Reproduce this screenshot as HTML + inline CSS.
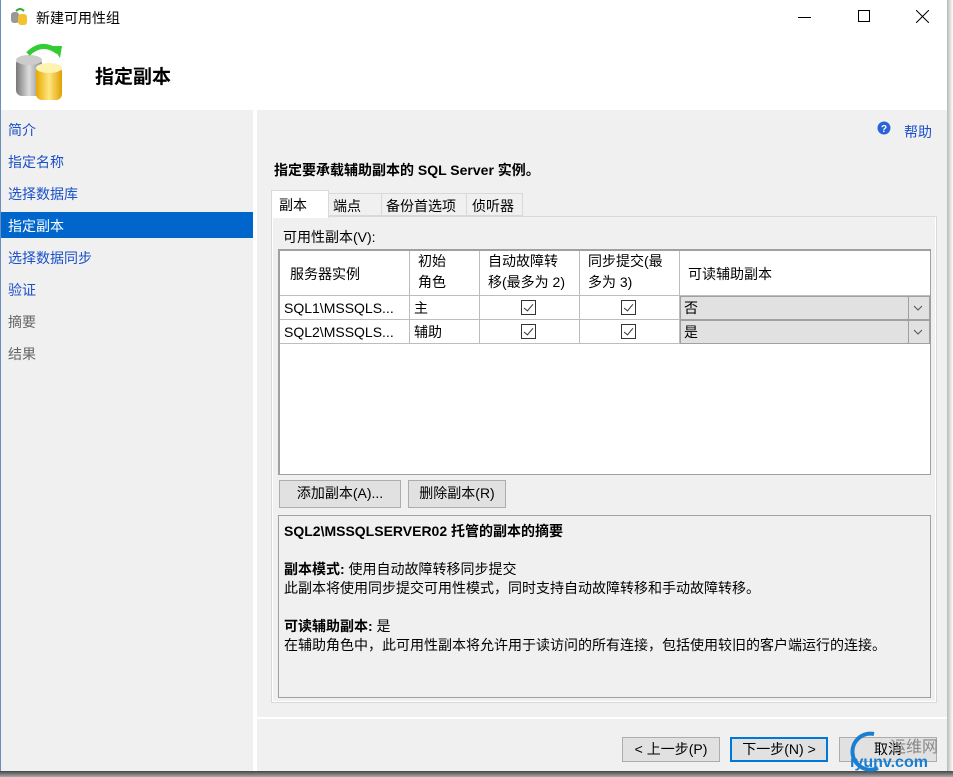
<!DOCTYPE html>
<html><head><meta charset="utf-8"><style>
*{margin:0;padding:0;box-sizing:border-box}
body{width:953px;height:777px;overflow:hidden;background:#fff;font-family:"Liberation Sans","Noto Sans CJK SC",sans-serif;font-size:14px;color:#000;position:relative}
.a{position:absolute}
.nav{color:#1a4fc8;font-size:14px;left:8px}
.btn{position:absolute;background:#e1e1e1;border:1px solid #adadad;text-align:center;font-size:14px;line-height:25px}
.cell{position:absolute;border-right:1px solid #bdbdbd;border-bottom:1px solid #bdbdbd;font-size:14px;padding-left:6px}
.cb{position:absolute;width:15px;height:15px;border:1px solid #333;background:#fff}
.cb:after{content:"";position:absolute;left:4px;top:1px;width:4px;height:8px;border-right:1.3px solid #333;border-bottom:1.3px solid #333;transform:rotate(40deg)}
</style></head><body>
<div class="a" style="left:0;top:0;width:1px;height:777px;background:#6a8fbf"></div>
<div class="a" style="left:947px;top:0;width:6px;height:777px;background:linear-gradient(90deg,#b8b8b8,#fff)"></div>
<div class="a" style="left:0;top:771px;width:953px;height:6px;background:linear-gradient(#444,#aaa)"></div>
<!-- title icon -->
<svg class="a" style="left:10px;top:7px" width="20" height="20"><rect x="1" y="5" width="8" height="11" rx="3" fill="#999"/><rect x="8" y="7" width="9" height="11" rx="3" fill="#f2c230"/><path d="M6 4 Q10 0 14 4" stroke="#3a3" stroke-width="2" fill="none"/></svg>
<div class="a" style="left:36px;top:8px;font-size:14px">新建可用性组</div>
<div class="a" style="left:798px;top:17px;width:13px;height:1px;background:#000"></div>
<div class="a" style="left:858px;top:10px;width:12px;height:12px;border:1px solid #000"></div>
<svg class="a" style="left:916px;top:10px" width="13" height="13"><path d="M0 0L13 13M13 0L0 13" stroke="#000" stroke-width="1"/></svg>
<!-- header icon -->
<svg class="a" style="left:14px;top:42px" width="58" height="60">
<defs><linearGradient id="g1" x1="0" x2="1"><stop offset="0" stop-color="#777"/><stop offset=".5" stop-color="#ddd"/><stop offset="1" stop-color="#888"/></linearGradient>
<linearGradient id="g2" x1="0" x2="1"><stop offset="0" stop-color="#e8a800"/><stop offset=".5" stop-color="#ffe680"/><stop offset="1" stop-color="#e0a000"/></linearGradient></defs>
<rect x="2" y="16" width="26" height="38" rx="6" fill="url(#g1)"/><ellipse cx="15" cy="18" rx="13" ry="5" fill="#ccc"/>
<rect x="22" y="24" width="26" height="34" rx="6" fill="url(#g2)"/><ellipse cx="35" cy="26" rx="13" ry="5" fill="#fff3b0"/>
<path d="M14 12 Q28 -2 44 10" stroke="#3c3" stroke-width="5" fill="none"/><path d="M38 4 L48 4 L46 16 Z" fill="#3c3"/></svg>
<div class="a" style="left:95px;top:62px;font-size:19px;font-weight:bold">指定副本</div>
<!-- left nav -->
<div class="a" style="left:1px;top:110px;width:252px;height:661px;background:#f0f0f0"></div>
<div class="a" style="left:253px;top:110px;width:4px;height:661px;background:#fff"></div>
<div class="a" style="left:1px;top:212px;width:252px;height:26px;background:#0066cc"></div>
<div class="a nav" style="top:120px">简介</div>
<div class="a nav" style="top:152px">指定名称</div>
<div class="a nav" style="top:184px">选择数据库</div>
<div class="a nav" style="top:216px;color:#fff">指定副本</div>
<div class="a nav" style="top:248px">选择数据同步</div>
<div class="a nav" style="top:280px">验证</div>
<div class="a nav" style="top:312px;color:#666">摘要</div>
<div class="a nav" style="top:344px;color:#666">结果</div>
<!-- right -->
<div class="a" style="left:257px;top:110px;width:690px;height:661px;background:#f0f0f0"></div>
<svg class="a" style="left:877px;top:121px" width="14" height="14"><circle cx="7" cy="7" r="6.5" fill="#2a63d8"/><text x="7" y="11" font-size="10" font-weight="bold" fill="#fff" text-anchor="middle" font-family="Liberation Sans">?</text></svg>
<div class="a" style="left:904px;top:122px;color:#1a4fc8">帮助</div>
<div class="a" style="left:274px;top:160px;font-weight:bold">指定要承载辅助副本的 SQL Server 实例。</div>
<!-- tabs -->
<div class="a" style="left:271px;top:216px;width:666px;height:487px;border:1px solid #d9d9d9;background:#f0f0f0"></div>
<div class="a" style="left:271px;top:190px;width:58px;height:28px;background:#fff;border:1px solid #d9d9d9;border-bottom:none;padding:4px 0 0 7px">副本</div>
<div class="a" style="left:329px;top:193px;width:53px;height:23px;background:#f0f0f0;border:1px solid #d9d9d9;border-left:none;padding:2px 0 0 4px">端点</div>
<div class="a" style="left:382px;top:193px;width:85px;height:23px;background:#f0f0f0;border:1px solid #d9d9d9;border-left:none;padding:2px 0 0 4px">备份首选项</div>
<div class="a" style="left:467px;top:193px;width:56px;height:23px;background:#f0f0f0;border:1px solid #d9d9d9;border-left:none;padding:2px 0 0 5px">侦听器</div>
<div class="a" style="left:272px;top:217px;width:664px;height:485px;border:1px solid #fff;border-top:none"></div>
<div class="a" style="left:283px;top:227px">可用性副本(V):</div>
<!-- grid -->
<div class="a" style="left:278px;top:249px;width:653px;height:226px;background:#fff;border:2px solid #a0a0a0;border-bottom:1px solid #a0a0a0;border-right:1px solid #a0a0a0"></div>
<div class="cell" style="left:280px;top:251px;width:130px;height:45px;padding-top:13px;padding-left:10px">服务器实例</div>
<div class="cell" style="left:410px;top:251px;width:70px;height:45px;line-height:21px;padding-left:8px">初始<br>角色</div>
<div class="cell" style="left:480px;top:251px;width:100px;height:45px;line-height:21px;padding-left:8px">自动故障转<br>移(最多为 2)</div>
<div class="cell" style="left:580px;top:251px;width:100px;height:45px;line-height:21px;padding-left:8px">同步提交(最<br>多为 3)</div>
<div class="cell" style="left:680px;top:251px;width:250px;height:45px;padding-top:13px;padding-left:8px;border-right:none">可读辅助副本</div>
<div class="cell" style="left:280px;top:296px;width:130px;height:24px;line-height:24px;padding-left:4px">SQL1\MSSQLS...</div>
<div class="cell" style="left:410px;top:296px;width:70px;height:24px;line-height:24px;padding-left:4px">主</div>
<div class="cell" style="left:480px;top:296px;width:100px;height:24px"></div>
<div class="cell" style="left:580px;top:296px;width:100px;height:24px"></div>
<div class="cell" style="left:280px;top:320px;width:130px;height:24px;line-height:24px;padding-left:4px">SQL2\MSSQLS...</div>
<div class="cell" style="left:410px;top:320px;width:70px;height:24px;line-height:24px;padding-left:4px">辅助</div>
<div class="cell" style="left:480px;top:320px;width:100px;height:24px"></div>
<div class="cell" style="left:580px;top:320px;width:100px;height:24px"></div>
<div class="cb" style="left:521px;top:300px"></div><div class="cb" style="left:621px;top:300px"></div>
<div class="cb" style="left:521px;top:324px"></div><div class="cb" style="left:621px;top:324px"></div>
<div class="a" style="left:680px;top:296px;width:250px;height:48px;background:#a0a0a0"></div>
<div class="a" style="left:681px;top:297px;width:248px;height:22px;background:#e1e1e1;line-height:22px;padding-left:3px">否</div>
<div class="a" style="left:681px;top:321px;width:248px;height:22px;background:#e1e1e1;line-height:22px;padding-left:3px">是</div>
<div class="a" style="left:908px;top:297px;width:1px;height:46px;background:#a0a0a0"></div>
<svg class="a" style="left:913px;top:305px" width="10" height="6"><path d="M1 1L5 5L9 1" stroke="#555" fill="none"/></svg>
<svg class="a" style="left:913px;top:329px" width="10" height="6"><path d="M1 1L5 5L9 1" stroke="#555" fill="none"/></svg>
<!-- buttons -->
<div class="btn" style="left:279px;top:480px;width:122px;height:28px">添加副本(A)...</div>
<div class="btn" style="left:408px;top:480px;width:98px;height:28px">删除副本(R)</div>
<!-- summary -->
<div class="a" style="left:278px;top:515px;width:653px;height:183px;border:1px solid #a0a0a0;background:#f0f0f0;padding:6px 0 0 5px;line-height:19px">
<div style="font-weight:bold">SQL2\MSSQLSERVER02 托管的副本的摘要</div>
<div style="height:19px"></div>
<div><b>副本模式:</b> 使用自动故障转移同步提交</div>
<div>此副本将使用同步提交可用性模式，同时支持自动故障转移和手动故障转移。</div>
<div style="height:19px"></div>
<div><b>可读辅助副本:</b> 是</div>
<div>在辅助角色中，此可用性副本将允许用于读访问的所有连接，包括使用较旧的客户端运行的连接。</div>
</div>
<div class="a" style="left:257px;top:717px;width:690px;height:2px;background:#fff"></div>
<div class="btn" style="left:622px;top:737px;width:98px;height:25px;line-height:23px">&lt; 上一步(P)</div>
<div class="btn" style="left:730px;top:737px;width:98px;height:25px;line-height:21px;border:2px solid #0078d7">下一步(N) &gt;</div>
<div class="btn" style="left:839px;top:737px;width:98px;height:25px;line-height:23px">取消</div>
<svg class="a" style="left:848px;top:728px" width="100" height="46"><path d="M26 6 A18 18 0 1 0 30 40" stroke="#1a7fd0" stroke-width="4" fill="none"/></svg>
<div class="a" style="left:890px;top:733px;color:#888;font-size:16px">运维网</div>
<div class="a" style="left:850px;top:754px;color:#1a7fd0;font-size:16px;font-weight:bold">iyunv.com</div>
</body></html>
